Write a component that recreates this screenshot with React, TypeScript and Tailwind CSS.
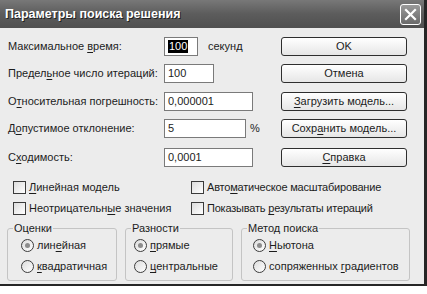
import React from "react";

const U = ({ c }: { c: string }) => <span className="underline underline-offset-2 decoration-1">{c}</span>;

function Input({ w, value, selected }: { w: string; value: string; selected?: boolean }) {
  return (
    <div className={`${w} shrink-0 h-[19px] bg-white border border-[#7a7a7a] flex items-center pl-[3px]`}>
      {selected ? <span className="bg-black text-white leading-[13px] px-[1px]">{value}</span> : <span className="leading-[13px]">{value}</span>}
    </div>
  );
}

function Btn({ children }: { children: React.ReactNode }) {
  return (
    <div className="w-[126px] h-[19px] rounded-[3px] border border-[#2e2e2e] bg-gradient-to-b from-white to-[#e6e6e6] flex items-center justify-center">
      {children}
    </div>
  );
}

function Check({ children }: { children: React.ReactNode }) {
  return (
    <div className="flex items-center gap-[3px] h-[19px] whitespace-nowrap">
      <div className="w-[13px] h-[13px] shrink-0 border border-[#3a3a3a] bg-gradient-to-br from-[#dcdcdc] to-white" />
      <span>{children}</span>
    </div>
  );
}

function Radio({ on, children }: { on?: boolean; children: React.ReactNode }) {
  return (
    <div className="flex items-center gap-[3px] h-[21px] whitespace-nowrap">
      <div className="w-[13px] h-[13px] shrink-0 rounded-full border border-[#3c3c3c] bg-gradient-to-br from-[#dcdcdc] to-white flex items-center justify-center">
        {on && <div className="w-[5px] h-[5px] rounded-full bg-[#8c8c8c]" />}
      </div>
      <span>{children}</span>
    </div>
  );
}

function Group({ title, w, pl, children }: { title: string; w: string; pl: string; children: React.ReactNode }) {
  return (
    <div className={`${w} shrink-0 relative h-[53px] rounded-[3px] border border-[#c4c4c4] ${pl} pt-[6px]`}>
      <span className="absolute left-[5px] top-[-8px] bg-[#ececec] px-[1px] leading-[14px] whitespace-nowrap">{title}</span>
      {children}
    </div>
  );
}

export default function App() {
  return (
    <div className="w-[427px] h-[294px] bg-white text-[11px] text-[#1c1c1c]" style={{ fontFamily: '"Liberation Sans", Arial, sans-serif' }}>
      <div className="w-[427px] h-[286px] flex flex-col border-r-[3px] border-b-[2px] border-[#262626]">
        <div className="h-[28px] flex items-center justify-between bg-gradient-to-b from-[#787878] via-[#5c5c5c] to-[#505050] pl-[5px] pr-[3px]">
          <span className="text-white font-bold text-[12.5px] [text-shadow:1px_1px_0_#222]">Параметры поиска решения</span>
          <div className="w-[21px] h-[21px] rounded-[3px] border border-white bg-gradient-to-b from-[#9a9a9a] to-[#6a6a6a] flex items-center justify-center">
            <svg width="13" height="13" viewBox="0 0 13 13">
              <path d="M2 2 L11 11 M11 2 L2 11" stroke="white" strokeWidth="2.2" strokeLinecap="square" />
            </svg>
          </div>
        </div>
        <div className="flex-1 bg-[#ececec] pl-[8px] pr-[17px] pt-[9px]">
          <div className="flex flex-col whitespace-nowrap">
            <div className="flex items-center h-[19px]">
              <span className="w-[156px] shrink-0">Максимальное <U c="в" />ремя:</span>
              <Input w="w-[34px]" value="100" selected />
              <span className="ml-[10px]">секунд</span>
              <div className="ml-auto"><Btn>OK</Btn></div>
            </div>
            <div className="flex items-center h-[19px] mt-[8px]">
              <span className="w-[156px] shrink-0">Предел<U c="ь" />ное число итераций:</span>
              <Input w="w-[50px]" value="100" />
              <div className="ml-auto"><Btn>Отмена</Btn></div>
            </div>
            <div className="flex items-center h-[19px] mt-[9px]">
              <span className="w-[156px] shrink-0">О<U c="т" />носительная погрешность:</span>
              <Input w="w-[89px]" value="0,000001" />
              <div className="ml-auto"><Btn><span><U c="З" />агрузить модель...</span></Btn></div>
            </div>
            <div className="flex items-center h-[19px] mt-[8px]">
              <span className="w-[156px] shrink-0">Д<U c="о" />пустимое отклонение:</span>
              <Input w="w-[82px]" value="5" />
              <span className="ml-[4px]">%</span>
              <div className="ml-auto"><Btn><span>Сохр<U c="а" />нить модель...</span></Btn></div>
            </div>
            <div className="flex items-center h-[19px] mt-[10px]">
              <span className="w-[156px] shrink-0">С<U c="х" />одимость:</span>
              <Input w="w-[89px]" value="0,0001" />
              <div className="ml-auto"><Btn><span><U c="С" />правка</span></Btn></div>
            </div>
          </div>
          <div className="flex mt-[11px] pl-[5px]">
            <div className="w-[178px] shrink-0 flex flex-col gap-[2px]">
              <Check><U c="Л" />инейная модель</Check>
              <Check>Неотрицательн<U c="ы" />е значения</Check>
            </div>
            <div className="flex flex-col gap-[2px] tracking-[-0.2px]">
              <Check>Авто<U c="м" />атическое масштабирование</Check>
              <Check>Показывать <U c="р" />езультаты итераций</Check>
            </div>
          </div>
          <div className="flex gap-[8px] mt-[10px] ml-[-1px]">
            <Group title="Оценки" w="w-[110px]" pl="pl-[13px]">
              <Radio on>лин<U c="е" />йная</Radio>
              <Radio><U c="к" />вадратичная</Radio>
            </Group>
            <Group title="Разности" w="w-[108px]" pl="pl-[8px]">
              <Radio on><U c="п" />рямые</Radio>
              <Radio><U c="ц" />ентральные</Radio>
            </Group>
            <Group title="Метод поиска" w="w-[169px]" pl="pl-[11px]">
              <Radio on><U c="Н" />ьютона</Radio>
              <Radio>сопряженных <U c="г" />радиентов</Radio>
            </Group>
          </div>
        </div>
      </div>
    </div>
  );
}
